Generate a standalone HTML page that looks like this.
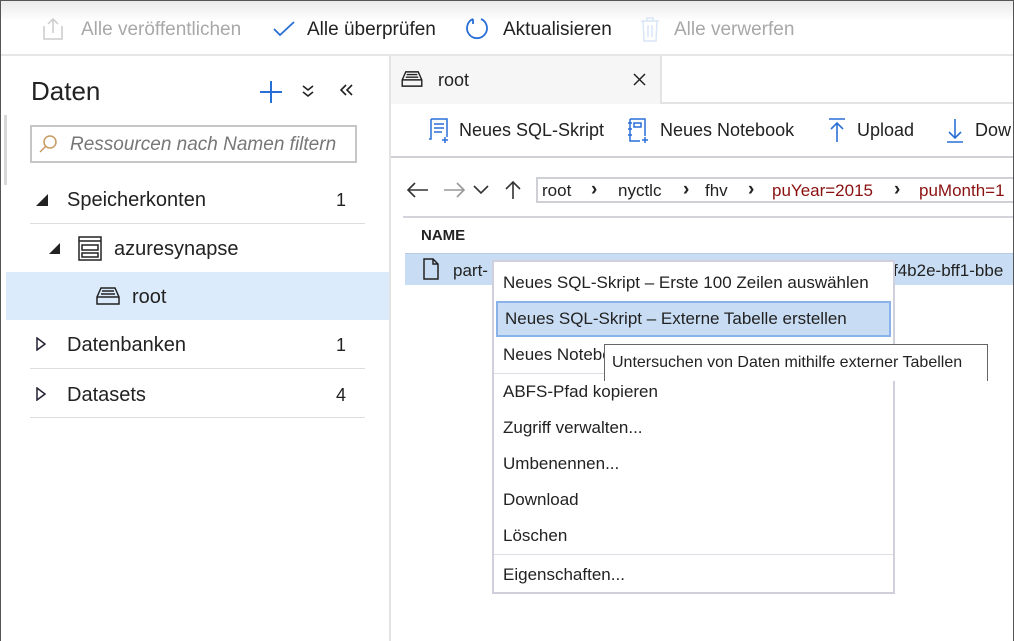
<!DOCTYPE html>
<html><head><meta charset="utf-8"><style>
*{box-sizing:border-box;margin:0;padding:0}
body{width:1014px;height:641px;overflow:hidden;font-family:"Liberation Sans",sans-serif;color:#222;background:#fff;position:relative}
.a{position:absolute;white-space:nowrap}
#frame{position:absolute;left:0;top:0;width:1014px;height:641px;border:1px solid #555;border-bottom:none;pointer-events:none}
#tb{left:0;top:0;width:1014px;height:56px;background:linear-gradient(#e9e9e9,#fff 40%);border-bottom:2px solid #e6e6e6}
.t{font-size:19px;top:19px}
.menu div{height:36px;line-height:36px;padding-left:9px;font-size:17px}
.bc{top:181px;font-size:17px}
.bs{top:179px;font-size:19px;font-weight:bold}
</style></head><body>
<div id="tb" class="a"></div>
<svg class="a" style="left:42px;top:17px" width="22" height="24" viewBox="0 0 22 24" fill="none" stroke="#ccc" stroke-width="1.5"><path d="M2 9v13h18V9M11 16V2M6 7l5-5 5 5"/></svg>
<div class="a t" style="left:81px;color:#a8a8a8">Alle veröffentlichen</div>
<svg class="a" style="left:273px;top:21px" width="22" height="16" viewBox="0 0 22 16" fill="none" stroke="#2a6fd6" stroke-width="1.8"><path d="M1 8l6 6L21 1"/></svg>
<div class="a t" style="left:307px">Alle überprüfen</div>
<svg class="a" style="left:464px;top:16px" width="26" height="26" viewBox="0 0 26 26" fill="none" stroke="#2a6fd6" stroke-width="1.8"><path d="M9 3A10 10 0 1 0 17 3"/><path d="M9 3v5"/></svg>
<div class="a t" style="left:503px">Aktualisieren</div>
<svg class="a" style="left:640px;top:16px" width="20" height="26" viewBox="0 0 20 26" fill="none" stroke="#d8e6f6" stroke-width="1.5"><path d="M1 5h18M7 5V2h6v3M3 5l1 20h12l1-20M8 9v12M12 9v12"/></svg>
<div class="a t" style="left:674px;color:#a8a8a8">Alle verwerfen</div>

<div class="a" style="left:389px;top:56px;width:2px;height:585px;background:#e3e3e3"></div>
<div class="a" style="left:4px;top:115px;width:3px;height:70px;background:#d8d8d8"></div>
<div class="a" style="left:31px;top:76px;font-size:26px">Daten</div>
<svg class="a" style="left:259px;top:80px" width="24" height="24" viewBox="0 0 24 24" stroke="#2a6fd6" stroke-width="2"><path d="M12 1v22M1 12h22"/></svg>
<svg class="a" style="left:301px;top:84px" width="14" height="14" viewBox="0 0 14 14" fill="none" stroke="#222" stroke-width="1.6"><path d="M2 2l5 4 5-4M2 8l5 4 5-4"/></svg>
<svg class="a" style="left:338px;top:83px" width="16" height="14" viewBox="0 0 16 14" fill="none" stroke="#222" stroke-width="1.6"><path d="M8 2L3 7l5 5M14 2L9 7l5 5"/></svg>
<div class="a" style="left:30px;top:125px;width:327px;height:38px;border:2px solid #c6c6c6"></div>
<svg class="a" style="left:38px;top:134px" width="20" height="20" viewBox="0 0 20 20" fill="none" stroke="#c79a60" stroke-width="1.5"><circle cx="12" cy="8" r="6"/><path d="M8 12l-6 6"/></svg>
<div class="a" style="left:70px;top:134px;font-size:19px;font-style:italic;color:#777">Ressourcen nach Namen filtern</div>
<svg class="a" style="left:36px;top:194px" width="12" height="12"><path d="M12 0v12H0z" fill="#222"/></svg>
<div class="a" style="left:67px;top:189px;font-size:20px">Speicherkonten</div>
<div class="a" style="left:336px;top:190px;font-size:18px">1</div>
<div class="a" style="left:30px;top:223px;width:335px;height:1px;background:#ddd"></div>
<svg class="a" style="left:49px;top:243px" width="11" height="11"><path d="M11 0v11H0z" fill="#222"/></svg>
<svg class="a" style="left:78px;top:236px" width="24" height="25" viewBox="0 0 24 25" fill="none" stroke="#222" stroke-width="1.5"><rect x="1" y="1" width="22" height="23"/><path d="M1 5h22M4 9h16v5H4zM4 17h16v4H4z"/></svg>
<div class="a" style="left:114px;top:238px;font-size:20px">azuresynapse</div>
<div class="a" style="left:6px;top:272px;width:383px;height:48px;background:#dcebfb"></div>
<svg class="a" style="left:96px;top:287px" width="24" height="18" viewBox="0 0 24 18" fill="none" stroke="#222" stroke-width="1.5"><path d="M5 1h14l4 9v7H1v-7zM1 10h22M6 4h12M5 7h14"/></svg>
<div class="a" style="left:132px;top:286px;font-size:20px">root</div>
<svg class="a" style="left:36px;top:337px" width="10" height="14" viewBox="0 0 10 14" fill="none" stroke="#223" stroke-width="1.5"><path d="M1 1l8 6-8 6z"/></svg>
<div class="a" style="left:67px;top:334px;font-size:20px">Datenbanken</div>
<div class="a" style="left:336px;top:335px;font-size:18px">1</div>
<div class="a" style="left:30px;top:368px;width:335px;height:1px;background:#ddd"></div>
<svg class="a" style="left:36px;top:387px" width="10" height="14" viewBox="0 0 10 14" fill="none" stroke="#223" stroke-width="1.5"><path d="M1 1l8 6-8 6z"/></svg>
<div class="a" style="left:67px;top:384px;font-size:20px">Datasets</div>
<div class="a" style="left:336px;top:385px;font-size:18px">4</div>
<div class="a" style="left:30px;top:417px;width:335px;height:1px;background:#ddd"></div>

<div class="a" style="left:391px;top:56px;width:271px;height:48px;background:#f6f6f6;border-right:2px solid #e3e3e3"></div>
<div class="a" style="left:662px;top:102px;width:352px;height:2px;background:#e3e3e3"></div>
<svg class="a" style="left:401px;top:71px" width="22" height="16" viewBox="0 0 24 18" fill="none" stroke="#222" stroke-width="1.6"><path d="M5 1h14l4 9v7H1v-7zM1 10h22M6 4h12M5 7h14"/></svg>
<div class="a" style="left:438px;top:70px;font-size:18px">root</div>
<svg class="a" style="left:633px;top:73px" width="13" height="13" stroke="#222" stroke-width="1.5"><path d="M1 1l11 11M12 1L1 12"/></svg>
<svg class="a" style="left:427px;top:117px" width="24" height="27" viewBox="0 0 24 27" fill="none" stroke="#2a6fd6" stroke-width="1.5"><path d="M4 2h16v18M4 2v20H2M7 7h10M7 11h10M7 15h8M18 20v6M15 23h6"/></svg>
<div class="a" style="left:459px;top:120px;font-size:18px">Neues SQL-Skript</div>
<svg class="a" style="left:626px;top:117px" width="24" height="27" viewBox="0 0 24 27" fill="none" stroke="#2a6fd6" stroke-width="1.5"><path d="M4 2h15v17M4 2v22h10M8 6h7v4H8zM2 6h4M2 12h4M2 18h4M19 20v6M16 23h6"/></svg>
<div class="a" style="left:660px;top:120px;font-size:18px">Neues Notebook</div>
<svg class="a" style="left:827px;top:117px" width="20" height="26" viewBox="0 0 20 26" fill="none" stroke="#2a6fd6" stroke-width="1.6"><path d="M2 2h16M10 6v19M4 12l6-6 6 6"/></svg>
<div class="a" style="left:857px;top:120px;font-size:18px">Upload</div>
<svg class="a" style="left:945px;top:117px" width="20" height="26" viewBox="0 0 20 26" fill="none" stroke="#2a6fd6" stroke-width="1.6"><path d="M2 25h16M10 2v19M4 15l6 6 6-6"/></svg>
<div class="a" style="left:975px;top:120px;font-size:18px">Dow</div>
<div class="a" style="left:391px;top:156px;width:623px;height:2px;background:#cfcfd6"></div>
<svg class="a" style="left:406px;top:180px" width="120" height="20" viewBox="0 0 120 20" fill="none" stroke-width="1.6"><path d="M22 10H2M9 3L2 10l7 7" stroke="#333"/><path d="M38 10h20M51 3l7 7-7 7" stroke="#999"/><path d="M68 6l7 7 7-7" stroke="#333"/><path d="M107 19V2M100 9l7-7 7 7" stroke="#333"/></svg>
<div class="a" style="left:536px;top:177px;width:480px;height:26px;border:2px solid #cfcfd6"></div>
<div class="a bc" style="left:542px">root</div>
<div class="a bs" style="left:591px">›</div>
<div class="a bc" style="left:618px">nyctlc</div>
<div class="a bs" style="left:633px;left:635px"></div>
<div class="a bs" style="left:743px;left:690px"></div>
<div class="a bs" style="left:683px">›</div>
<div class="a bc" style="left:705px">fhv</div>
<div class="a bs" style="left:748px">›</div>
<div class="a bc" style="left:772px;color:#8a1010">puYear=2015</div>
<div class="a bs" style="left:894px">›</div>
<div class="a bc" style="left:919px;color:#8a1010">puMonth=1</div>
<div class="a" style="left:403px;top:216px;width:611px;height:2px;background:#d4d4dc"></div>
<div class="a" style="left:421px;top:227px;font-size:15px;font-weight:bold">NAME</div>
<div class="a" style="left:405px;top:253px;width:609px;height:32px;background:#c8ddf3;border-top:1px solid #b9cde6"></div>
<svg class="a" style="left:423px;top:258px" width="16" height="22" viewBox="0 0 16 22" fill="none" stroke="#222" stroke-width="1.5"><path d="M1 1h9l5 5v15H1zM10 1v5h5"/></svg>
<div class="a" style="left:453px;top:261px;font-size:17px">part-</div>
<div class="a" style="left:893px;top:261px;font-size:17px">f4b2e-bff1-bbe</div>

<div class="a menu" style="left:492px;top:260px;width:403px;height:334px;background:#fff;border:2px solid #cfd0dc;padding-top:3px">
<div>Neues SQL-Skript – Erste 100 Zeilen auswählen</div>
<div style="background:#c8ddf3;border:2px solid #8ab2ea;margin:0 2px;padding-left:7px;line-height:32px">Neues SQL-Skript – Externe Tabelle erstellen</div>
<div>Neues Notebook</div>
<div style="height:0;border-top:1px solid #dcdce4"></div>
<div>ABFS-Pfad kopieren</div>
<div>Zugriff verwalten...</div>
<div>Umbenennen...</div>
<div>Download</div>
<div>Löschen</div>
<div style="height:0;border-top:1px solid #dcdce4"></div>
<div style="height:38px;line-height:40px">Eigenschaften...</div>
</div>
<div class="a" style="left:604px;top:344px;width:384px;height:37px;background:#fff;border:1px solid #666;border-bottom:none;font-size:16px;padding:9px 0 0 7px">Untersuchen von Daten mithilfe externer Tabellen</div>
<div id="frame"></div>
</body></html>
